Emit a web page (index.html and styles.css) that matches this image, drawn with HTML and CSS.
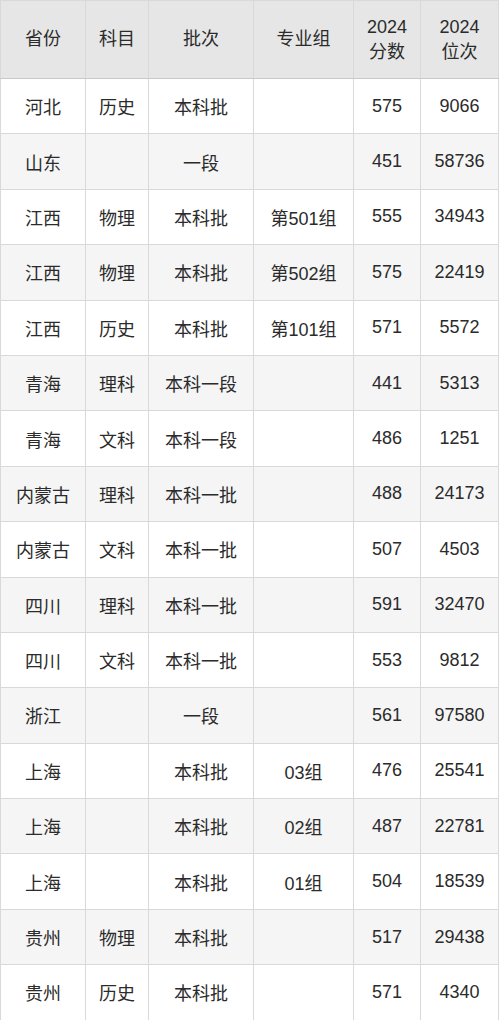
FILE: index.html
```html
<!DOCTYPE html>
<html lang="zh">
<head>
<meta charset="utf-8">
<link rel="stylesheet" href="styles.css">
</head>
<body>
<table class="score-table">
  <colgroup>
    <col class="c1"><col class="c2"><col class="c3"><col class="c4"><col class="c5"><col class="c6">
  </colgroup>
  <thead>
    <tr class="head">
      <th>省份</th><th>科目</th><th>批次</th><th>专业组</th><th>2024<br>分数</th><th>2024<br>位次</th>
    </tr>
  </thead>
  <tbody>
    <tr><td>河北</td><td>历史</td><td>本科批</td><td></td><td>575</td><td>9066</td></tr>
    <tr><td>山东</td><td></td><td>一段</td><td></td><td>451</td><td>58736</td></tr>
    <tr><td>江西</td><td>物理</td><td>本科批</td><td>第501组</td><td>555</td><td>34943</td></tr>
    <tr><td>江西</td><td>物理</td><td>本科批</td><td>第502组</td><td>575</td><td>22419</td></tr>
    <tr><td>江西</td><td>历史</td><td>本科批</td><td>第101组</td><td>571</td><td>5572</td></tr>
    <tr><td>青海</td><td>理科</td><td>本科一段</td><td></td><td>441</td><td>5313</td></tr>
    <tr><td>青海</td><td>文科</td><td>本科一段</td><td></td><td>486</td><td>1251</td></tr>
    <tr><td>内蒙古</td><td>理科</td><td>本科一批</td><td></td><td>488</td><td>24173</td></tr>
    <tr><td>内蒙古</td><td>文科</td><td>本科一批</td><td></td><td>507</td><td>4503</td></tr>
    <tr><td>四川</td><td>理科</td><td>本科一批</td><td></td><td>591</td><td>32470</td></tr>
    <tr><td>四川</td><td>文科</td><td>本科一批</td><td></td><td>553</td><td>9812</td></tr>
    <tr><td>浙江</td><td></td><td>一段</td><td></td><td>561</td><td>97580</td></tr>
    <tr><td>上海</td><td></td><td>本科批</td><td>03组</td><td>476</td><td>25541</td></tr>
    <tr><td>上海</td><td></td><td>本科批</td><td>02组</td><td>487</td><td>22781</td></tr>
    <tr><td>上海</td><td></td><td>本科批</td><td>01组</td><td>504</td><td>18539</td></tr>
    <tr><td>贵州</td><td>物理</td><td>本科批</td><td></td><td>517</td><td>29438</td></tr>
    <tr><td>贵州</td><td>历史</td><td>本科批</td><td></td><td>571</td><td>4340</td></tr>
  </tbody>
</table>
</body>
</html>
```

FILE: styles.css
```css
html, body {
  margin: 0;
  padding: 0;
  background: #ffffff;
}

.score-table {
  border-collapse: collapse;
  table-layout: fixed;
  width: 498px;
  font-family: "Liberation Sans", "Noto Sans CJK SC", sans-serif;
  font-size: 18px;
  color: #2b2b2b;
}

.c1 { width: 85px; }
.c2 { width: 63px; }
.c3 { width: 105px; }
.c4 { width: 100px; }
.c5 { width: 67px; }
.c6 { width: 78px; }

.score-table th,
.score-table td {
  border: 1px solid #d9d9d9;
  text-align: center;
  vertical-align: middle;
  padding: 0;
  font-weight: normal;
}

.score-table th {
  background: #e6e6e6;
  line-height: 25px;
  border-bottom-color: #c9c9c9;
}

.head {
  height: 78px;
}

.score-table tbody tr {
  height: 55.4px;
}

.score-table tbody tr:nth-child(even) td {
  background: #f5f5f5;
}
```
